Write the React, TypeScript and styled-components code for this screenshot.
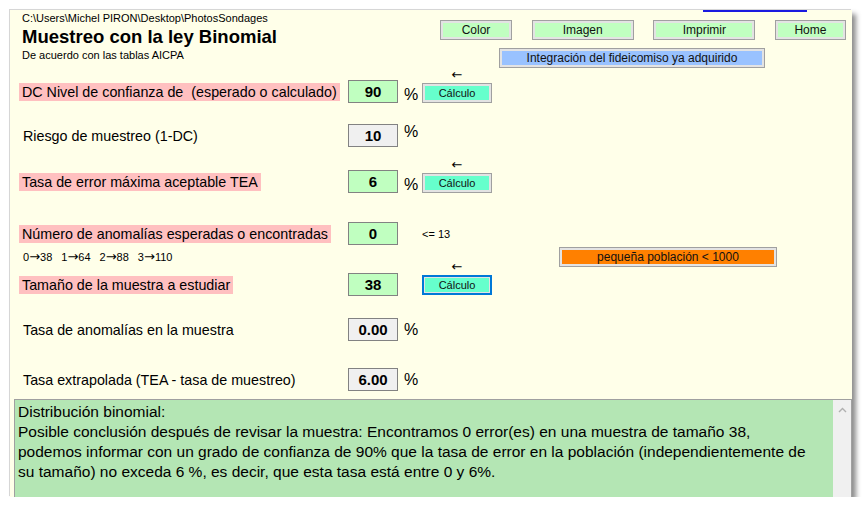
import React from "react";
import styled, { createGlobalStyle } from "styled-components";

const GlobalStyle = createGlobalStyle`
  html, body {
    margin: 0;
    padding: 0;
    background: #ffffff;
  }
  body {
    font-family: "Liberation Sans", Arial, sans-serif;
    color: #000;
  }
`;

const Window = styled.div`
  margin: 10px 0 0 10px;
  width: 842px;
  height: 487px;
  background: #ffffe9;
  box-shadow: -1px -1px 0 #d6d6d6, 4px 4px 5px rgba(0, 0, 0, 0.45);
  display: flex;
  flex-direction: column;
`;

const LinkStub = styled.div`
  flex: none;
  margin-left: 693px;
  width: 104px;
  height: 2px;
  background: #1a1ae0;
`;

const Header = styled.header`
  display: flex;
  justify-content: space-between;
  align-items: flex-start;
  padding: 0 6px 0 12px;
`;

const TitleBlock = styled.div`
  display: flex;
  flex-direction: column;
`;

const Path = styled.div`
  font-size: 11px;
  line-height: 13px;
`;

const Title = styled.h1`
  margin: 2px 0 0;
  font-size: 18.5px;
  line-height: 20px;
  font-weight: bold;
`;

const Subtitle = styled.div`
  margin-top: 2px;
  font-size: 11px;
  line-height: 13px;
`;

const ToolBlock = styled.div`
  width: 406px;
  margin-top: 8px;
  display: flex;
  flex-direction: column;
  gap: 8px;
`;

const ToolRow = styled.div`
  display: flex;
  justify-content: space-between;
`;

const FlatButton = styled.button<{ $w: number; $bg: string; $ml?: number }>`
  box-sizing: border-box;
  width: ${(p) => p.$w}px;
  height: 20px;
  margin-left: ${(p) => p.$ml ?? 0}px;
  padding: 0;
  border: 1px solid #a0a0a0;
  box-shadow: inset 0 0 0 2px #e3e3e3;
  background: ${(p) => p.$bg};
  font: 12px "Liberation Sans", Arial, sans-serif;
  color: #111;
`;

const Row = styled.div<{ $mt: number }>`
  display: grid;
  grid-template-columns: 329px 50px 24px 70px;
  align-items: center;
  height: 23px;
  margin-top: ${(p) => p.$mt}px;
  padding-left: 9px;
`;

const Label = styled.span<{ $hl?: boolean }>`
  justify-self: start;
  padding: ${(p) => (p.$hl ? "0 3px" : "0 4px")};
  background: ${(p) => (p.$hl ? "#ffc0c0" : "transparent")};
  font-size: 14.3px;
  line-height: 18px;
  white-space: pre;
`;

const Value = styled.div<{ $tone: "green" | "gray" }>`
  box-sizing: border-box;
  width: 50px;
  height: 23px;
  border: 1px solid #828282;
  background: ${(p) => (p.$tone === "green" ? "#c0ffc0" : "#f0f0f0")};
  display: flex;
  align-items: center;
  justify-content: center;
  font-size: 15px;
  font-weight: bold;
`;

const Percent = styled.span<{ $align?: "start" | "center" | "end" }>`
  align-self: ${(p) => p.$align ?? "center"};
  padding-left: 6px;
  font-size: 16px;
  line-height: 16px;
`;

const Action = styled.div<{ $align?: "center" | "end" }>`
  align-self: ${(p) => p.$align ?? "center"};
  display: flex;
  flex-direction: column;
  align-items: center;
`;

const Arrow = styled.span`
  height: 12px;
  margin: -14px 0 2px;
  font-family: "DejaVu Sans", sans-serif;
  font-size: 13px;
  line-height: 12px;
`;

const CalcButton = styled.button<{ $focus?: boolean }>`
  box-sizing: border-box;
  width: 70px;
  height: 20px;
  padding: 0;
  border: ${(p) => (p.$focus ? "2px solid #0078d7" : "1px solid #a0a0a0")};
  box-shadow: inset 0 0 0 ${(p) => (p.$focus ? 1 : 2)}px #e3e3e3;
  background: #66ffcc;
  font: 11px "Liberation Sans", Arial, sans-serif;
  color: #111;
`;

const Note = styled.span`
  justify-self: start;
  font-size: 11px;
`;

const HintRow = styled.div`
  display: grid;
  grid-template-columns: 536px 218px;
  align-items: center;
  height: 20px;
  margin-top: 2px;
  padding-left: 13px;
`;

const Hints = styled.span`
  display: flex;
  gap: 9px;
  font-size: 11px;
`;

const HintArrow = styled.span`
  font-family: "DejaVu Sans", sans-serif;
  font-size: 13px;
  line-height: 11px;
`;

const Remarks = styled.div`
  flex: 1;
  display: flex;
  margin: 8px 0 0 4px;
  border: 1px solid #a0a0a0;
  border-bottom: none;
  background: #b4e6b4;
`;

const RemarkText = styled.div`
  flex: 1;
  padding: 2px 0 0 3px;
  font-size: 15.5px;
  line-height: 20px;
  white-space: nowrap;
  overflow: hidden;
`;

const ScrollBar = styled.div`
  width: 18px;
  background: #f0f0f0;
  display: flex;
  justify-content: center;
  padding-top: 7px;
`;

type FieldProps = {
  mt: number;
  label: string;
  hl?: boolean;
  value: string;
  tone: "green" | "gray";
  percent?: "start" | "center" | "end";
  children?: React.ReactNode;
};

function Field({ mt, label, hl, value, tone, percent, children }: FieldProps) {
  return (
    <Row $mt={mt}>
      <Label $hl={hl}>{label}</Label>
      <Value $tone={tone}>{value}</Value>
      {percent ? <Percent $align={percent}>%</Percent> : <span />}
      {children}
    </Row>
  );
}

function Calc({ align, focus }: { align?: "center" | "end"; focus?: boolean }) {
  return (
    <Action $align={align}>
      <Arrow>←</Arrow>
      <CalcButton $focus={focus}>Cálculo</CalcButton>
    </Action>
  );
}

const hints: [string, string][] = [
  ["0", "38"],
  ["1", "64"],
  ["2", "88"],
  ["3", "110"],
];

export default function App() {
  return (
    <>
      <GlobalStyle />
      <Window>
        <LinkStub />
        <Header>
          <TitleBlock>
            <Path>C:\Users\Michel PIRON\Desktop\PhotosSondages</Path>
            <Title>Muestreo con la ley Binomial</Title>
            <Subtitle>De acuerdo con las tablas AICPA</Subtitle>
          </TitleBlock>
          <ToolBlock>
            <ToolRow>
              <FlatButton $w={72} $bg="#c0ffc0">Color</FlatButton>
              <FlatButton $w={102} $bg="#c0ffc0">Imagen</FlatButton>
              <FlatButton $w={102} $bg="#c0ffc0">Imprimir</FlatButton>
              <FlatButton $w={71} $bg="#c0ffc0">Home</FlatButton>
            </ToolRow>
            <FlatButton $w={266} $ml={59} $bg="#99c2ff">
              Integración del fideicomiso ya adquirido
            </FlatButton>
          </ToolBlock>
        </Header>

        <Field mt={12} hl label="DC Nivel de confianza de  (esperado o calculado)" value="90" tone="green" percent="end">
          <Calc align="end" />
        </Field>
        <Field mt={21} label="Riesgo de muestreo (1-DC)" value="10" tone="gray" percent="start" />
        <Field mt={23} hl label="Tasa de error máxima aceptable TEA" value="6" tone="green" percent="end">
          <Calc align="end" />
        </Field>
        <Field mt={29} hl label="Número de anomalías esperadas o encontradas" value="0" tone="green">
          <Note>{"<= 13"}</Note>
        </Field>
        <HintRow>
          <Hints>
            {hints.map(([n, size]) => (
              <span key={n}>
                {n}
                <HintArrow>→</HintArrow>
                {size}
              </span>
            ))}
          </Hints>
          <FlatButton $w={218} $bg="#ff8000">pequeña población &lt; 1000</FlatButton>
        </HintRow>
        <Field mt={6} hl label="Tamaño de la muestra a estudiar" value="38" tone="green">
          <Calc focus />
        </Field>
        <Field mt={22} label="Tasa de anomalías en la muestra" value="0.00" tone="gray" percent="center" />
        <Field mt={27} label="Tasa extrapolada (TEA - tasa de muestreo)" value="6.00" tone="gray" percent="center" />

        <Remarks>
          <RemarkText>
            Distribución binomial:
            <br />
            Posible conclusión después de revisar la muestra: Encontramos 0 error(es) en una muestra de tamaño 38,
            <br />
            podemos informar con un grado de confianza de 90% que la tasa de error en la población (independientemente de
            <br />
            su tamaño) no exceda 6 %, es decir, que esta tasa está entre 0 y 6%.
          </RemarkText>
          <ScrollBar>
            <svg width="9" height="6" viewBox="0 0 9 6">
              <path d="M1 5 L4.5 1.5 L8 5" fill="none" stroke="#b0b0b0" strokeWidth="1.4" />
            </svg>
          </ScrollBar>
        </Remarks>
      </Window>
    </>
  );
}
